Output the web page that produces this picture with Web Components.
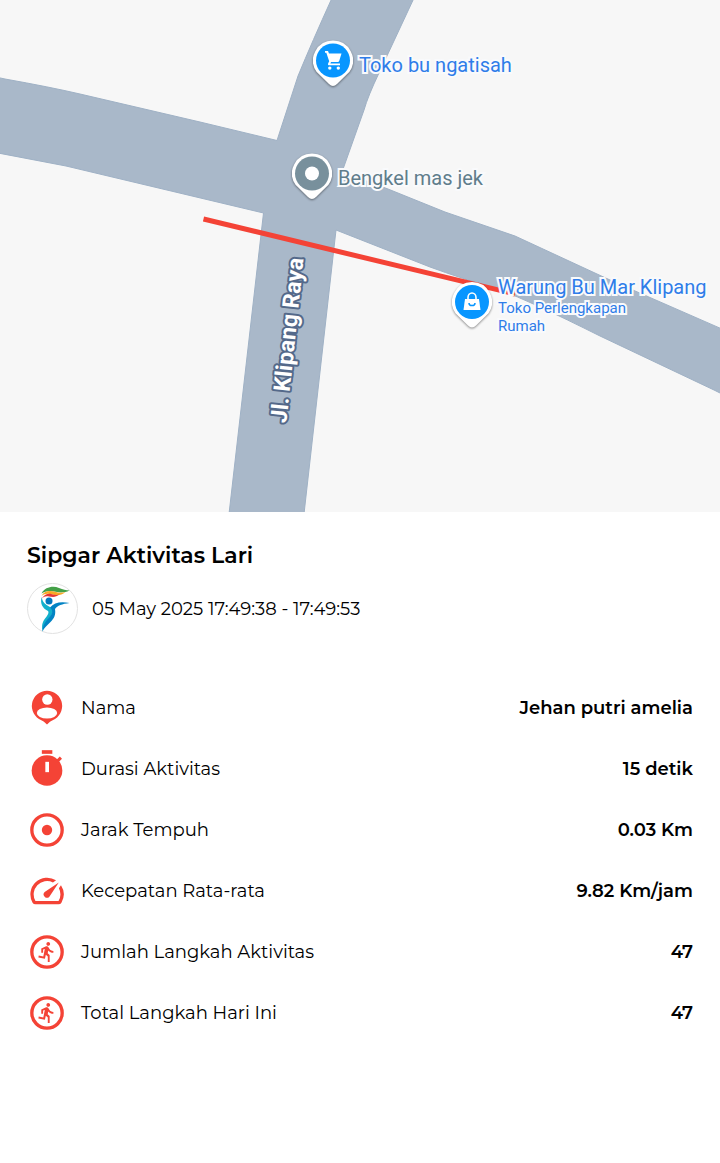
<!DOCTYPE html>
<html lang="id">
<head>
  <meta charset="utf-8">
  <meta name="viewport" content="width=device-width, initial-scale=1">
  <title>Sipgar Aktivitas Lari</title>
  <style>
    body {
      margin: 0;
      background: #fff;
      color: #000;
      font-family: Montserrat, Inter, sans-serif;
    }
  </style>
</head>
<body>
  <route-map>
    <map-place icon="cart" style="--x: 313; --y: 64">Toko bu ngatisah</map-place>
    <map-place icon="dot" style="--x: 292; --y: 177">Bengkel mas jek</map-place>
    <map-place icon="bag" style="--x: 452; --y: 305">
      Warung Bu Mar Klipang
      <span slot="detail">Toko Perlengkapan<br>Rumah</span>
    </map-place>
  </route-map>

  <activity-summary>
    <span slot="title">Sipgar Aktivitas Lari</span>
    <span slot="time">05 May 2025 17:49:38 - 17:49:53</span>
    <activity-row icon="person" label="Nama">Jehan putri amelia</activity-row>
    <activity-row icon="timer" label="Durasi Aktivitas">15 detik</activity-row>
    <activity-row icon="target" label="Jarak Tempuh">0.03 Km</activity-row>
    <activity-row icon="speed" label="Kecepatan Rata-rata">9.82 Km/jam</activity-row>
    <activity-row icon="run" label="Jumlah Langkah Aktivitas">47</activity-row>
    <activity-row icon="run" label="Total Langkah Hari Ini">47</activity-row>
  </activity-summary>

  <script>
    const RUN_PATH = 'M13.49 5.48c1.1 0 2-.9 2-2s-.9-2-2-2-2 .9-2 2 .9 2 2 2zm-3.6 13.9l1-4.4 2.1 2v6h2v-7.5l-2.1-2 .6-3c1.3 1.5 3.3 2.5 5.5 2.5v-2c-1.9 0-3.5-1-4.3-2.4l-1-1.6c-.4-.6-1-1-1.7-1-.3 0-.5.1-.8.1l-5.2 2.2v4.7h2v-3.4l1.8-.7-1.6 8.1-4.9-1-.4 2 7 1.4z';

    // 24x24 icons of the statistics list
    const ROW_ICONS = {
      person: `
        <path d="M12 1.6a9.2 9.2 0 0 0-3.4 17.7c1.2.5 1.9 1 3.4 2.6 1.5-1.6 2.2-2.1 3.4-2.6A9.2 9.2 0 0 0 12 1.6z"/>
        <circle cx="12.2" cy="6.9" r="3.1" fill="#fff"/>
        <ellipse cx="12" cy="15" rx="6.1" ry="3.3" fill="#fff"/>`,
      timer: `
        <path d="M8.9.7h6.3v2.2H8.9z"/>
        <circle cx="12" cy="12.9" r="9.2"/>
        <path d="M17.6 6.6l2.1-2.1 1.3 1.3-2.1 2.1z"/>
        <path d="M11 7.7h2.2v6.2H11z" fill="#fff"/>`,
      target: `
        <circle cx="12" cy="12" r="9.1" fill="none" stroke="currentColor" stroke-width="2"/>
        <circle cx="12" cy="12" r="3.1"/>`,
      speed: `
        <path d="M20.38 8.57l-1.23 1.85a8 8 0 0 1-.22 7.58H5.07A8 8 0 0 1 15.58 6.85l1.85-1.23A10 10 0 0 0 3.35 19a2 2 0 0 0 1.72 1h13.85a2 2 0 0 0 1.74-1 10 10 0 0 0-.27-10.44z"/>
        <path d="M10.59 15.41a2 2 0 0 0 2.83 0l5.66-8.49-8.49 5.66a2 2 0 0 0 0 2.83z"/>`,
      run: `
        <circle cx="12" cy="12" r="9.1" fill="none" stroke="currentColor" stroke-width="2"/>
        <path transform="translate(5.2 5.2) scale(.56)" d="${RUN_PATH}"/>`
    };

    // Drawn in the 40x47 box of a map pin, head centred on 20,20
    const PIN_ICONS = {
      cart: `
        <circle cx="20" cy="20" r="17" fill="#0896ff"/>
        <path fill="#fff" d="M12 10.5h3l1 2.5h12.5l-2.3 7.5q-.3 1-1.4 1H18l-.6 1.5h9.6v1.8H16.5q-2.2 0-1.3-2l1-2-2.9-8.5H12z"/>
        <circle cx="16.8" cy="27.6" r="1.7" fill="#fff"/>
        <circle cx="25.3" cy="27.6" r="1.7" fill="#fff"/>`,
      dot: `
        <circle cx="20" cy="20" r="17" fill="#78909c"/>
        <circle cx="20" cy="20" r="7" fill="#fff"/>`,
      bag: `
        <circle cx="20" cy="20" r="17" fill="#0896ff"/>
        <path fill="#fff" d="M13 17h14l1.5 11h-17z"/>
        <path fill="none" stroke="#fff" stroke-width="1.6" d="M16 17.5v-2a4 4.5 0 0 1 8 0v2"/>
        <path fill="none" stroke="#0896ff" stroke-width="1.5" d="M17 21a3 2.6 0 0 0 6 0"/>`
    };

    class RouteMap extends HTMLElement {
      constructor() {
        super();
        this.attachShadow({ mode: 'open' });
      }

      connectedCallback() {
        this.shadowRoot.innerHTML = `
          <style>
            :host {
              display: block;
              position: relative;
              overflow: hidden;
              background: #f7f7f7;
            }
            svg {
              display: block;
              width: 100%;
              height: auto;
            }
            .road {
              fill: #a9b8c9;
              stroke: #9fb1c5;
              stroke-width: 1;
            }
            .street {
              font: 700 23px Roboto, sans-serif;
              fill: #fff;
              stroke: #54698a;
              stroke-width: 4;
              stroke-linejoin: round;
              paint-order: stroke;
              text-anchor: middle;
            }
          </style>
          <svg viewBox="0 0 720 512">
            <path class="road" d="M-2 77.5L5 79Q50 87 80 94L200 122 277 140.5 298 76Q312 42 332-2H414L379 73Q368 96 364 110L342 172 388 189 445 212 515 236 610 280 722 329V394L714 390 600 336Q530 301 500 290 460 278 430 267L336 230 304 514H229L263.5 213 66 166 -2 153z"/>
            <path d="M203.5 219L515 294" stroke="#f44336" stroke-width="5"/>
            <text class="street" transform="translate(295 341) rotate(-84)">Jl. Klipang Raya</text>
          </svg>
          <slot></slot>
        `;
      }
    }

    class MapPlace extends HTMLElement {
      constructor() {
        super();
        this.attachShadow({ mode: 'open' });
      }

      connectedCallback() {
        const icon = this.getAttribute('icon') || 'dot';

        this.shadowRoot.innerHTML = `
          <style>
            :host {
              position: absolute;
              left: calc(var(--x) / 720 * 100%);
              top: calc(var(--y) / 512 * 100%);
              transform: translateY(-50%);
              display: flex;
              align-items: center;
              gap: 6px;
              color: #2f7de9;
              font: 20px/24px Roboto, sans-serif;
              white-space: nowrap;
              -webkit-text-stroke: 4px #f9fafc;
              paint-order: stroke fill;
              stroke-linejoin: round;
            }
            :host([icon="dot"]) {
              color: #607d8b;
            }
            svg {
              flex: none;
              overflow: visible;
              filter: drop-shadow(0 1px 1px rgba(0, 0, 0, 0.45));
            }
            ::slotted([slot="detail"]) {
              display: block;
              font-size: 15px;
              line-height: 18px;
            }
          </style>
          <svg width="40" height="47" viewBox="0 0 40 47">
            <path fill="#fff" d="M20 0a20 20 0 0 0-16.5 31.3L16 43.5q4 4 8 0L36.5 31.3A20 20 0 0 0 20 0z"/>
            ${PIN_ICONS[icon]}
          </svg>
          <div>
            <slot></slot>
            <slot name="detail"></slot>
          </div>
        `;
      }
    }

    class ClubLogo extends HTMLElement {
      constructor() {
        super();
        this.attachShadow({ mode: 'open' });
      }

      connectedCallback() {
        this.shadowRoot.innerHTML = `
          <style>
            :host {
              display: block;
              box-sizing: border-box;
              width: 51px;
              height: 51px;
              border: 1px solid #e2e2e2;
              border-radius: 50%;
            }
            svg {
              display: block;
              width: 100%;
              height: 100%;
            }
          </style>
          <svg viewBox="1 1 49 49">
            <path fill="#43a047" d="M14.5 10.5C18 4 26 2.5 32 5 36 6.7 39 7 42.5 7.5 37 10.2 31 9.5 27 8.5 22 7.3 18 8 14.5 10.5z"/>
            <path fill="#f9a825" d="M14.5 13C17 8 22 7 28 8.8 32 10 35 10 38.5 9 34 12.8 29 12.6 25 11.2 20 10 17 10.8 14.5 13z"/>
            <path fill="#e53935" d="M14.5 16C17 11.5 21 10 25 11.2 28 12.2 30 12.2 32.500 11.600 29 14.600 25 14 22 13.400 18 12.800 16 14 14.500 16z"/>
            <circle cx="22" cy="18" r="3.5" fill="#0277bd"/>
            <path fill="#12b0cc" d="M14.600 14C13 20 15 25 21 28 22.500 30 20 33 17 37 14.500 41 15 45 15.500 48.500 16 43 20 38 24 33 27 29 27 26 23 24 18 21.500 15.500 19 14.600 14z"/>
            <path fill="#0283c4" d="M23 24.500C27 19.500 34 18 42.500 20 35 21 30.500 22.500 28 26 29 32 27 35.500 23.500 39 20 42.500 17 45 15.500 48.500 15.500 42 19 38 23 33.500 26 30 26 27 23 24.500z"/>
          </svg>
        `;
      }
    }

    class ActivitySummary extends HTMLElement {
      constructor() {
        super();
        this.attachShadow({ mode: 'open' });
      }

      connectedCallback() {
        this.shadowRoot.innerHTML = `
          <style>
            :host {
              display: block;
              padding: 30px 27px;
            }
            h1 {
              margin: 0 0 13px;
              font-size: 22px;
              font-weight: 600;
              line-height: 28px;
            }
            .session {
              display: flex;
              align-items: center;
              gap: 14px;
              margin-bottom: 43px;
              font-size: 18px;
              line-height: 24px;
            }
          </style>
          <h1><slot name="title"></slot></h1>
          <div class="session">
            <club-logo></club-logo>
            <slot name="time"></slot>
          </div>
          <slot></slot>
        `;
      }
    }

    class ActivityRow extends HTMLElement {
      constructor() {
        super();
        this.attachShadow({ mode: 'open' });
      }

      connectedCallback() {
        const icon = this.getAttribute('icon');
        const label = this.getAttribute('label') || '';

        this.shadowRoot.innerHTML = `
          <style>
            :host {
              display: flex;
              align-items: center;
              gap: 14px;
              min-height: 61px;
              font-size: 18px;
              line-height: 24px;
            }
            svg {
              flex: none;
              width: 40px;
              height: 40px;
              color: #f44336;
              fill: currentColor;
            }
            .label {
              flex: 1;
            }
            .value {
              font-weight: 600;
              text-align: right;
            }
          </style>
          <svg viewBox="0 0 24 24">${ROW_ICONS[icon]}</svg>
          <span class="label">${label}</span>
          <span class="value"><slot></slot></span>
        `;
      }
    }

    customElements.define('route-map', RouteMap);
    customElements.define('map-place', MapPlace);
    customElements.define('club-logo', ClubLogo);
    customElements.define('activity-summary', ActivitySummary);
    customElements.define('activity-row', ActivityRow);
  </script>
</body>
</html>
